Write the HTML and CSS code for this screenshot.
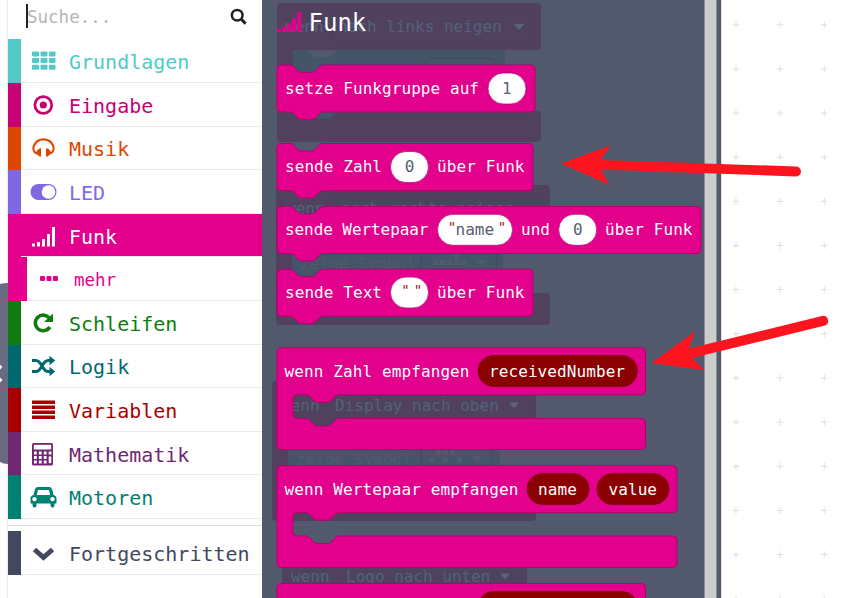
FILE: index.html
```
<!DOCTYPE html>
<html lang="de">
<head>
<meta charset="utf-8">
<title>Blockeditor</title>
<link rel="stylesheet" href="styles.css">
</head>
<body>
<main class="editor">
  <div class="gutter"><div class="handle"><svg width="8" height="181" viewBox="0 0 8 181"><path d="M0 1Q3 0 8 0V181Q3 181 0 179Z" fill="#686c80"/><path d="M0 81.500l2.500 2.500L0 86.500ZM0 94.500l2.500 2.500L0 99.500Z" fill="#fff"/></svg></div></div>
  <nav class="toolbox">
    <div class="search"><span class="caret"></span><span class="placeholder">Suche...</span>
      <svg class="lens" width="18" height="18" viewBox="0 0 18 18" fill="none" stroke="#222"><circle cx="7.2" cy="7.2" r="5.3" stroke-width="2.5"/><path d="M11 11l4.6 4.6" stroke-width="3"/></svg>
    </div>
    <div class="row basic"><svg class="icon" viewBox="0 0 28 24" fill="currentColor"><g id="cells"><rect x="3" y="2.500" width="7" height="5" rx="1"/><rect x="11.500" y="2.500" width="7" height="5" rx="1"/><rect x="20" y="2.500" width="6.500" height="5" rx="1"/></g><use href="#cells" y="6.600"/><use href="#cells" y="13.200"/></svg><span>Grundlagen</span></div>
    <div class="row input"><svg class="icon" viewBox="0 0 28 24"><circle cx="14.300" cy="12" r="8.400" fill="none" stroke="currentColor" stroke-width="2.700"/><circle cx="14.300" cy="12" r="3.600" fill="currentColor"/></svg><span>Eingabe</span></div>
    <div class="row music"><svg class="icon" viewBox="0 0 28 24"><path d="M7 17.500C4 15 4 11.500 5 9.500C8.500 1.200 20.500 1.200 24 9.500C25 11.500 25 15 22 17.500" fill="none" stroke="currentColor" stroke-width="2.200"/><path d="M12 12V20.500H10.500L6 17L9.500 13ZM17 12V20.500H18.500L23 17L19.500 13Z" fill="currentColor"/></svg><span>Musik</span></div>
    <div class="row led"><svg class="icon" viewBox="0 0 28 24"><rect x="1.500" y="4" width="26" height="16" rx="8" fill="currentColor"/><circle cx="19.500" cy="12" r="6.800" fill="#fff"/></svg><span>LED</span></div>
    <div class="row radio"><svg class="icon" viewBox="0 0 28 24" fill="currentColor"><path d="M3 19.500h3v3H3zM8 18h3v4.500H8zM13 15h3v7.500h-3zM18 10h3v12.500h-3zM23 3h3v19.500h-3z"/></svg><span>Funk</span></div>
    <div class="row more"><svg class="dots" width="18" height="6" viewBox="0 0 18 6" fill="currentColor"><rect width="5" height="5" rx="1"/><rect x="6.500" width="5" height="5" rx="1"/><rect x="13" width="5" height="5" rx="1"/></svg><span>mehr</span></div>
    <div class="row loops"><svg class="icon" viewBox="0 0 28 24"><path d="M20.200 7A7.800 7.800 0 1 0 20.800 16" fill="none" stroke="currentColor" stroke-width="3.500"/><path d="M24 2.500V11H15Z" fill="currentColor"/></svg><span>Schleifen</span></div>
    <div class="row logic"><svg class="icon" viewBox="0 0 28 24"><path d="M3 6.500H7C13 6.500 13 17.500 19 17.500H21M3 17.500H7C13 17.500 13 6.500 19 6.500H21" fill="none" stroke="currentColor" stroke-width="3"/><path d="M20.500 1.800L26.200 6.500L20.500 11.200ZM20.500 12.800L26.200 17.500L20.500 22.200Z" fill="currentColor"/></svg><span>Logik</span></div>
    <div class="row vars"><svg class="icon" viewBox="0 0 28 24" fill="currentColor"><path d="M3 2.500h23v3.500H3zM3 7.500h23v3.500H3zM3 12.500h23v3.500H3zM3 17.500h23v3.500H3z"/></svg><span>Variablen</span></div>
    <div class="row math"><svg class="icon" viewBox="0 0 28 24"><rect x="3" y="1" width="21" height="22.500" rx="1.500" fill="currentColor"/><rect x="4.800" y="2.800" width="17.400" height="4.700" fill="#fff"/><g fill="none" stroke="#fff" stroke-width="2.800" stroke-dasharray="2.800 2.100"><path d="M5 11H23M5 15.500H18M5 20H18"/></g><rect x="19.700" y="14.200" width="2.600" height="7" rx="1" fill="#fff"/></svg><span>Mathematik</span></div>
    <div class="row motors"><svg class="icon" viewBox="0 0 28 24"><path fill-rule="evenodd" d="M8.500 2H20.500Q22.500 2 23.200 4.500L24.500 10Q27.500 10.500 27.500 13.500V18.500H25.500V20.500A2 2 0 0 1 21.500 20.500V18.500H7.500V20.500A2 2 0 0 1 3.500 20.500V18.500H1.500V13.500Q1.500 10.500 4.500 10L5.800 4.500Q6.500 2 8.500 2ZM9 5L7.800 10H21.200L20 5ZM5.500 12a2.200 2.200 0 1 0 .01 0ZM23.500 12a2.200 2.200 0 1 0 .01 0Z" fill="currentColor"/></svg><span>Motoren</span></div>
    <div class="divider"></div>
    <div class="row advanced"><svg class="icon" viewBox="0 0 28 24"><path d="M5.500 8.500L14.500 16.500L23.500 8.500" fill="none" stroke="currentColor" stroke-width="5"/></svg><span>Fortgeschritten</span></div>
  </nav>
  <svg class="workspace" width="597" height="598" viewBox="262 0 597 598">
    <defs>
      <pattern id="grid" x="713.900" y="2.700" width="44.150" height="44.150" patternUnits="userSpaceOnUse"><path d="M18.600 22.100h7M22.100 18.600v7" stroke="#dcdfe1" stroke-width="1"/></pattern>
    </defs>
    <rect x="262" width="597" height="598" fill="#fff"/>
    <rect x="722" width="137" height="598" fill="url(#grid)"/>
    <rect x="262" width="459" height="598" fill="#53596c"/>

    <g class="ghost">
      <g class="event"><path d="M281 3H537a4 4 0 0 1 4 4V46a4 4 0 0 1-4 4H293V111H537a4 4 0 0 1 4 4V138a4 4 0 0 1-4 4H281a4 4 0 0 1-4-4V7a4 4 0 0 1 4-4Z"/><path d="M280 185H546a4 4 0 0 1 4 4V233H292V293H546a4 4 0 0 1 4 4V321a4 4 0 0 1-4 4H280a4 4 0 0 1-4-4V189a4 4 0 0 1 4-4Z"/><path d="M276 381H532a4 4 0 0 1 4 4V428H288V490H532a4 4 0 0 1 4 4V517a4 4 0 0 1-4 4H276a4 4 0 0 1-4-4V385a4 4 0 0 1 4-4Z"/><path d="M286 567H527V598H282V571a4 4 0 0 1 4-4Z"/></g>
      <g class="action"><path d="M297 50H306l8 7.500h16l8-7.500H501a4 4 0 0 1 4 4V111H338l-8 7.500H314l-8-7.500H293V54a4 4 0 0 1 4-4Z"/><path d="M292 233H503V293H292ZM288 428H500V490H288Z"/></g>
      <g class="field"><rect x="332" y="10.500" width="201" height="31" rx="4"/><rect x="330" y="193.500" width="211" height="31" rx="4"/><rect x="328" y="389.500" width="200" height="31" rx="4"/><rect x="426" y="58.500" width="70" height="31" rx="4"/><path d="M421 248V280M497 248V280M421 443V475M492 443V475"/></g>
      <text x="285" y="32">wenn</text><text x="338" y="32">nach links neigen</text>
      <text x="286" y="214">wenn</text><text x="341" y="214">nach rechts neigen</text>
      <text x="281" y="411">wenn</text><text x="335" y="411">Display nach oben</text>
      <text x="291" y="582">wenn</text><text x="346" y="582">Logo nach unten</text>
      <g class="symbol"><text x="300" y="269">zeige Symbol</text><text x="296" y="465">zeige Symbol</text>
      <path d="M433 260h5v5h-5zM440 260h5v5h-5zM447 260h5v5h-5zM454 260h5v5h-5zM461 260h5v5h-5zM454 254h5v5h-5zM429 457h5v5h-5zM436 450h5v5h-5zM443 450h5v5h-5zM450 450h5v5h-5zM443 457h5v5h-5zM457 457h5v5h-5z"/><path d="M476 260h11l-5.500 6zM472 456h10l-5 6z"/></g>
      <path d="M513.500 24h11l-5.500 6zM509 402.500h10l-5 6zM500 573.500h10l-5 6z"/>
    </g>

    <g class="title"><path d="M277 29h4v3H277zM282 27h4v5H282zM287 23.500h4v8.500H287zM292 18.500h4v13.500H292zM297.200 12h4v20h-4z"/><text x="308.500" y="31">Funk</text></g>

    <g class="block">
      <path d="M277 69a4 4 0 0 1 4-4H290c2 0 3 1 4 2l4 4c1 1 2 1.500 4 1.500h9c2 0 3-.5 4-1.500l4-4c1-1 2-2 4-2H531a4 4 0 0 1 4 4V108a4 4 0 0 1-4 4H323c-2 0-3 1-4 2l-4 4c-1 1-2 1.500-4 1.500h-9c-2 0-3-.5-4-1.500l-4-4c-1-1-2-2-4-2H281a4 4 0 0 1-4-4Z"/>
      <path d="M277 147.500a4 4 0 0 1 4-4H290c2 0 3 1 4 2l4 4c1 1 2 1.500 4 1.500h9c2 0 3-.5 4-1.500l4-4c1-1 2-2 4-2H529a4 4 0 0 1 4 4V186.500a4 4 0 0 1-4 4H323c-2 0-3 1-4 2l-4 4c-1 1-2 1.500-4 1.500h-9c-2 0-3-.5-4-1.500l-4-4c-1-1-2-2-4-2H281a4 4 0 0 1-4-4Z"/>
      <path d="M277 210.500a4 4 0 0 1 4-4H290c2 0 3 1 4 2l4 4c1 1 2 1.500 4 1.500h9c2 0 3-.5 4-1.500l4-4c1-1 2-2 4-2H697a4 4 0 0 1 4 4V249.500a4 4 0 0 1-4 4H323c-2 0-3 1-4 2l-4 4c-1 1-2 1.500-4 1.500h-9c-2 0-3-.5-4-1.500l-4-4c-1-1-2-2-4-2H281a4 4 0 0 1-4-4Z"/>
      <path d="M277 273.200a4 4 0 0 1 4-4H290c2 0 3 1 4 2l4 4c1 1 2 1.500 4 1.500h9c2 0 3-.5 4-1.500l4-4c1-1 2-2 4-2H529a4 4 0 0 1 4 4V312.200a4 4 0 0 1-4 4H323c-2 0-3 1-4 2l-4 4c-1 1-2 1.500-4 1.500h-9c-2 0-3-.5-4-1.500l-4-4c-1-1-2-2-4-2H281a4 4 0 0 1-4-4Z"/>
      <path d="M281 347.800H641.500a4 4 0 0 1 4 4V390.800a4 4 0 0 1-4 4H339c-2 0-3 1-4 2l-4 4c-1 1-2 1.500-4 1.500h-9c-2 0-3-.5-4-1.500l-4-4c-1-1-2-2-4-2H297a4 4 0 0 0-4 4V414.500a4 4 0 0 0 4 4H306c2 0 3 1 4 2l4 4c1 1 2 1.500 4 1.500h9c2 0 3-.5 4-1.500l4-4c1-1 2-2 4-2H641.500a4 4 0 0 1 4 4V445.500a4 4 0 0 1-4 4H281a4 4 0 0 1-4-4V351.800a4 4 0 0 1 4-4Z"/>
      <path d="M281 465.700H673a4 4 0 0 1 4 4V508.700a4 4 0 0 1-4 4H339c-2 0-3 1-4 2l-4 4c-1 1-2 1.500-4 1.500h-9c-2 0-3-.5-4-1.500l-4-4c-1-1-2-2-4-2H297a4 4 0 0 0-4 4V532a4 4 0 0 0 4 4H306c2 0 3 1 4 2l4 4c1 1 2 1.500 4 1.500h9c2 0 3-.5 4-1.500l4-4c1-1 2-2 4-2H673a4 4 0 0 1 4 4V563.500a4 4 0 0 1-4 4H281a4 4 0 0 1-4-4V469.700a4 4 0 0 1 4-4Z"/>
      <path d="M277 610V587.500a4 4 0 0 1 4-4H641.500a4 4 0 0 1 4 4V610Z"/>
    </g>
    <g class="value"><rect x="488" y="73" width="38" height="31" rx="15.500"/><rect x="390.500" y="151.500" width="38" height="31" rx="15.500"/><rect x="437.500" y="214.300" width="75" height="31" rx="15.500"/><rect x="558.700" y="214.300" width="38" height="31" rx="15.500"/><rect x="390.500" y="277" width="38" height="31" rx="15.500"/></g>
    <g class="param"><rect x="478" y="355.500" width="159.500" height="31" rx="15.500"/><rect x="527" y="473.500" width="62" height="31" rx="15.500"/><rect x="597" y="473.500" width="72" height="31" rx="15.500"/><rect x="478" y="591.500" width="159.500" height="31" rx="15.500"/></g>
    <g class="label">
      <text x="285" y="94" textLength="194">setze Funkgruppe auf</text>
      <text x="285" y="172" textLength="97">sende Zahl</text><text x="437" y="172" textLength="87.500">über Funk</text>
      <text x="285" y="235" textLength="143.500">sende Wertepaar</text><text x="521" y="235" textLength="29">und</text><text x="605" y="235" textLength="87.500">über Funk</text>
      <text x="285" y="298" textLength="97">sende Text</text><text x="437" y="298" textLength="87.500">über Funk</text>
      <text x="284.500" y="377" textLength="185">wenn Zahl empfangen</text><text x="489" y="377" textLength="136">receivedNumber</text>
      <text x="284.500" y="495" textLength="234">wenn Wertepaar empfangen</text><text x="538" y="495" textLength="39">name</text><text x="608.500" y="495" textLength="48.500">value</text>
    </g>
    <g class="number"><text x="502" y="94">1</text><text x="404.700" y="172">0</text><text x="455.500" y="235">name</text><text x="573" y="235">0</text></g>
    <g class="quote"><text x="447.800" y="231.500">"</text><text x="497.800" y="231.500">"</text><text x="401.300" y="294.500">"</text><text x="413.700" y="294.500">"</text></g>

    <path d="M705 0H716V598H705Z" fill="#ccc"/><path d="M704.500 0V598M716.500 0V598" stroke="#8c909a"/><path d="M721.500 0V598" stroke="#e0e3e7"/>
    <g class="pointer"><path d="M561 163.500L610.500 145.500L600.500 160L796 166.500A5 5 0 0 1 796 176.500L601 169.500L609.500 185Z"/><path d="M651.500 363L695 331.500L689 348.500L822 316A5 5 0 0 1 825 325.500L692 358L704 370Z"/></g>
  </svg>
</main>
</body>
</html>
```
FILE: styles.css
```
* { box-sizing: border-box; }
body { margin: 0; background: #fff; overflow: hidden; }
.editor { display: flex; width: 859px; height: 598px; font-family: "DejaVu Sans Mono", monospace; }
.gutter { width: 8px; padding-top: 283px; border-right: 1px solid #ececec; }
.handle { height: 181px; width: 8px; }
.handle svg { display: block; }
.toolbox { width: 254px; height: 598px; background: #fff; }
.workspace { display: block; flex: none; }
.search { display: flex; align-items: center; height: 39.300px; padding: 0 14.500px 6px 18px; }
.caret { width: 2px; height: 24px; margin-bottom: 2px; background: #222; }
.placeholder { flex: 1; margin-left: -1px; font-size: 17.500px; color: #b5b5b5; }
.row { display: flex; align-items: center; height: 43.620px; padding-left: 8px; border-left: 13px solid; font-size: 20px; box-shadow: inset 0 -1px #e9ebed; white-space: nowrap; }
.row span { line-height: 24px; padding-top: 2px; }
.icon { width: 28px; height: 24px; margin-right: 12px; flex: none; }
.basic { color: #54c9c9; }
.input { color: #c90072; }
.music { color: #de4700; }
.led { color: #8068e5; }
.radio { background: #e3008c; color: #fff; border-left-color: #e3008c; }
.more { color: #e3008c; border-left-width: 19px; padding-left: 13px; font-size: 17.500px; }
.dots { margin-right: 16px; }
.loops { color: #107c10; }
.logic { color: #006970; }
.vars { color: #a80000; }
.math { color: #712672; }
.motors { color: #008272; }
.divider { height: 12px; padding-top: 6px; }
.divider::before { content: ""; display: block; height: 1px; background: #dedede; }
.advanced { color: #42495f; height: 44px; }
.ghost { font-size: 16px; fill: #5c6278; }
.ghost text { fill: #53637a; }
.event { fill: #50415f; }
.action { fill: #445469; }
.field { fill: none; stroke: #4a3d59; opacity: .6; }
.symbol, .ghost .symbol text { fill: #53596c; }
.title { fill: #e3008c; font-size: 24px; }
.title text { fill: #fff; }
.block { fill: #e3008c; stroke: #b60070; stroke-width: 1; }
.value { fill: #fff; stroke: #b60070; stroke-width: .7; }
.param { fill: #8b0000; stroke: #700000; stroke-width: .7; }
.label { fill: #fff; font-size: 16px; }
.number { fill: #575e75; font-size: 16px; }
.quote { fill: #a31515; font-size: 14px; }
.pointer { fill: #fc151f; }
```
